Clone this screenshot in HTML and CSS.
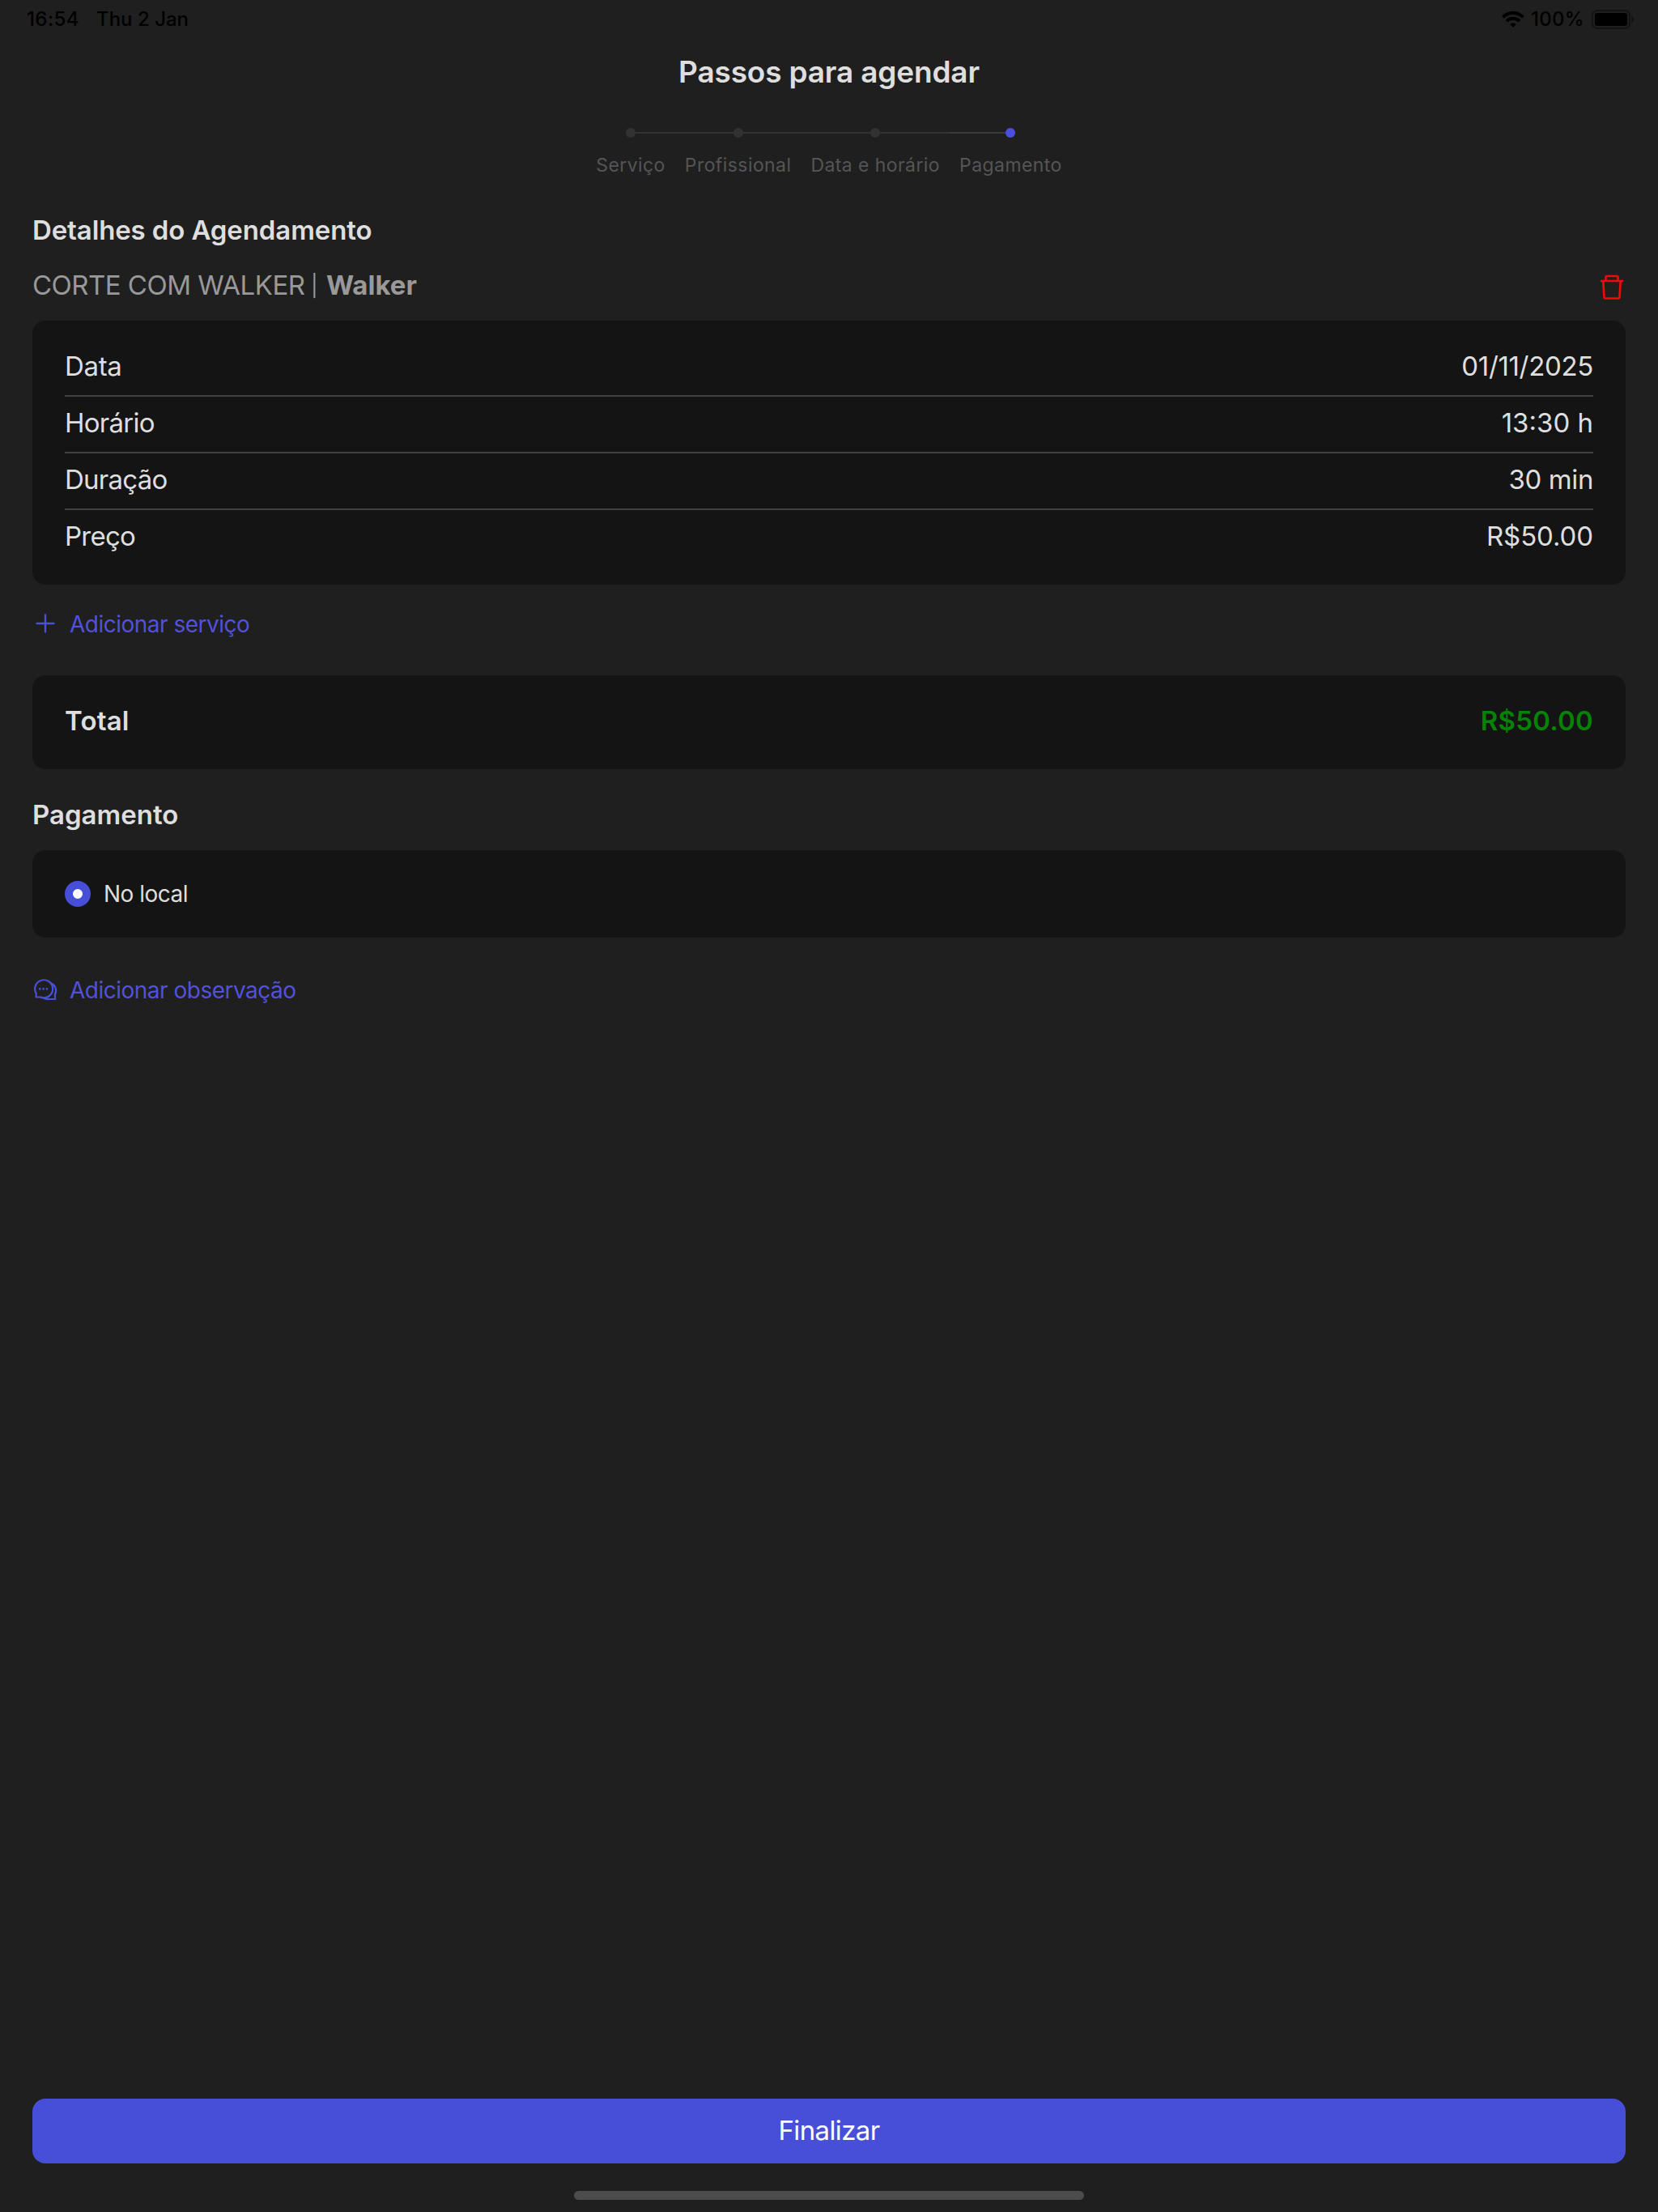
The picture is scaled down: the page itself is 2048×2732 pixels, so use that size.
FILE: index.html
```html
<!DOCTYPE html>
<html lang="pt-BR">
<head>
<meta charset="utf-8">
<title>Passos para agendar</title>
<link rel="stylesheet" href="styles.css">
</head>
<body>
<div class="screen">
  <header class="status">
    <span class="clock">16:54</span>
    <span class="date">Thu 2 Jan</span>
    <svg class="wifi" width="28" height="20" viewBox="0 0 28 20" fill="none" stroke="#000" stroke-width="4">
      <path d="M1.400 7.200C8.400 .2 19.600 .2 26.600 7.200"/>
      <path d="M6 12.200C10.400 7.700 17.600 7.700 22 12.200"/>
      <path d="M14 20l-3.900-3.900c2.100-2 5.700-2 7.800 0z" fill="#000" stroke="none"/>
    </svg>
    <span class="charge">100%</span>
    <svg class="battery" width="54" height="24" viewBox="0 0 54 24">
      <rect x="1" y="1" width="46" height="22" rx="6" fill="none" stroke="#131313" stroke-width="2"/>
      <rect x="4" y="4" width="40" height="16" rx="3" fill="#000"/>
      <path d="M49.500 8c3.600 1.500 3.600 6.500 0 8z" fill="#131313"/>
    </svg>
  </header>

  <h1 class="title">Passos para agendar</h1>

  <ol class="steps">
    <li class="step">Serviço</li>
    <li class="step">Profissional</li>
    <li class="step">Data e horário</li>
    <li class="step active">Pagamento</li>
  </ol>

  <main class="content">
    <h2 class="heading">Detalhes do Agendamento</h2>
    <div class="service">
      <span class="service-name">CORTE COM WALKER</span>
      <span class="divider">|</span>
      <b class="service-pro">Walker</b>
      <svg class="trash" width="30" height="32" viewBox="0 0 30 32" fill="none" stroke="#f50808" stroke-width="2.700" stroke-linejoin="round" stroke-linecap="round">
        <path d="M2 8h26"/>
        <path d="M7.500 7.500V3.500q0-1.500 1.500-1.500h12q1.500 0 1.500 1.500v4"/>
        <path d="M4.300 8.500l1.200 19.500q.1 1.500 1.600 1.500h15.800q1.500 0 1.600-1.500l1.200-19.500"/>
      </svg>
    </div>

    <dl class="card details">
      <div class="row"><dt class="data">Data</dt><dd class="day">01/11/2025</dd></div>
      <div class="row"><dt class="tight">Horário</dt><dd>13:30 h</dd></div>
      <div class="row"><dt class="tight">Duração</dt><dd class="length">30 min</dd></div>
      <div class="row"><dt class="tight">Preço</dt><dd class="price">R$50.00</dd></div>
    </dl>

    <div class="link add-service">
      <svg width="32" height="32" viewBox="0 0 32 32" fill="none" stroke="#4a4fd8" stroke-width="2.400" stroke-linecap="round"><path d="M16 5.500v21M5.500 16h21"/></svg>
      <span>Adicionar serviço</span>
    </div>

    <div class="card total"><span>Total</span><span class="amount">R$50.00</span></div>

    <h2 class="heading payment">Pagamento</h2>
    <label class="card option"><span class="radio"></span><span>No local</span></label>

    <div class="link add-note">
      <svg width="32" height="32" viewBox="0 0 32 32" fill="none" stroke="#4a4fd8" stroke-width="2.200" stroke-linejoin="round">
        <path d="M4.600 25.500V20.800A11 11 0 1 1 14 26.300Q11.600 26.300 10 25.500Z"/>
        <path d="M22.600 8.200A9.800 9.800 0 0 1 27.800 22.400L28.300 28H20.500Q16.500 28.300 13.600 26.300"/>
        <g fill="#4a4fd8" stroke="none"><circle cx="9.300" cy="15.400" r="1.300"/><circle cx="13.600" cy="15.400" r="1.300"/><circle cx="17.900" cy="15.400" r="1.300"/></g>
      </svg>
      <span>Adicionar observação</span>
    </div>
  </main>

  <footer class="footer">
    <button class="submit" type="button">Finalizar</button>
    <div class="home-bar"></div>
  </footer>
</div>
</body>
</html>
```
FILE: styles.css
```css
* { box-sizing: border-box; margin: 0; padding: 0; }

body {
  background: #1f1f1f;
  color: #dedede;
  font-family: Inter, "Liberation Sans", sans-serif;
}

.screen { display: flex; flex-direction: column; height: 2732px; }

/* status bar */
.status {
  display: flex;
  align-items: center;
  height: 47px;
  padding: 0 28px 0 33px;
  color: #000;
  font-size: 24px;
  font-weight: 500;
  white-space: nowrap;
}
.clock { width: 86px; letter-spacing: 0.4px; }
.wifi { margin-left: auto; }
.charge { width: 75px; margin-left: 8px; letter-spacing: 0.3px; }
.battery { width: 54px; flex: none; }

.title {
  height: 83px;
  font-size: 37px;
  line-height: 83px;
  font-weight: 600;
  letter-spacing: -0.17px;
  text-align: center;
}

/* progress steps */
.steps {
  display: flex;
  justify-content: center;
  height: 92px;
  margin-top: 28px;
  list-style: none;
}
.step {
  position: relative;
  padding: 30px 12px 0;
  color: #555;
  font-size: 23px;
  line-height: 32px;
  letter-spacing: 0.42px;
}
.step::before {
  content: "";
  position: absolute;
  top: 5px;
  left: 0;
  right: 0;
  height: 2px;
  background: #323232;
}
.step:first-child::before { left: 50%; }
.step:last-child::before { right: 50%; background: #3b3b3b; }
.step::after {
  content: "";
  position: absolute;
  top: 0;
  left: calc(50% - 6px);
  width: 12px;
  height: 12px;
  border-radius: 50%;
  background: #323232;
}
.step.active::after { background: #4a50dd; }

.content { padding: 0 40px; }

.heading {
  height: 68px;
  font-size: 33px;
  line-height: 68px;
  font-weight: 600;
  letter-spacing: -0.12px;
}

.service {
  display: flex;
  align-items: center;
  height: 68px;
  color: #999;
  font-size: 33px;
}
.service-name { width: 344px; letter-spacing: -0.52px; white-space: nowrap; }
.divider { width: 19px; font-size: 26px; }
.service-pro { font-weight: 700; }
.trash { margin: 6px 2px 0 auto; }

.card { border-radius: 16px; background: #141414; }

.details { height: 326px; margin-top: 10px; padding: 24px 40px 0; }
.row {
  display: flex;
  justify-content: space-between;
  height: 70px;
  border-bottom: 2px solid #424242;
  font-size: 33px;
  line-height: 65px;
}
.row:last-child { border-bottom: 0; }
.data { letter-spacing: -0.35px; }
.tight { letter-spacing: -0.75px; }
.day { letter-spacing: -0.33px; }
.length { letter-spacing: -0.4px; }
.price { letter-spacing: -0.1px; }

.link {
  display: flex;
  align-items: center;
  gap: 14px;
  height: 32px;
  color: #5251da;
  font-size: 28px;
  letter-spacing: -0.5px;
}
.link span { padding-top: 1px; }
.add-service { margin-top: 32px; }
.add-note { margin-top: 48px; }

.total {
  display: flex;
  justify-content: space-between;
  height: 116px;
  margin-top: 48px;
  padding: 0 40px;
  font-size: 33px;
  line-height: 112px;
  font-weight: 600;
  letter-spacing: 0.2px;
}
.amount { color: #078207; }

.payment { height: 100px; line-height: 113px; letter-spacing: 0; }

.option {
  display: flex;
  align-items: center;
  gap: 16px;
  height: 108px;
  padding: 0 40px;
  font-size: 28px;
  letter-spacing: -0.5px;
}
.radio {
  width: 32px;
  height: 32px;
  border: 10px solid #474fd8;
  border-radius: 50%;
  background: #fff;
}

.footer { margin-top: auto; padding: 0 40px 15px; }
.submit {
  display: block;
  width: 100%;
  height: 80px;
  border: 0;
  border-radius: 16px;
  background: #474fd9;
  color: #fff;
  font-family: inherit;
  font-size: 33px;
  line-height: 78px;
  padding-bottom: 2px;
  letter-spacing: -0.62px;
}
.home-bar {
  width: 630px;
  height: 11px;
  margin: 34px auto 0;
  border-radius: 6px;
  background: #4c4c4c;
}
```
